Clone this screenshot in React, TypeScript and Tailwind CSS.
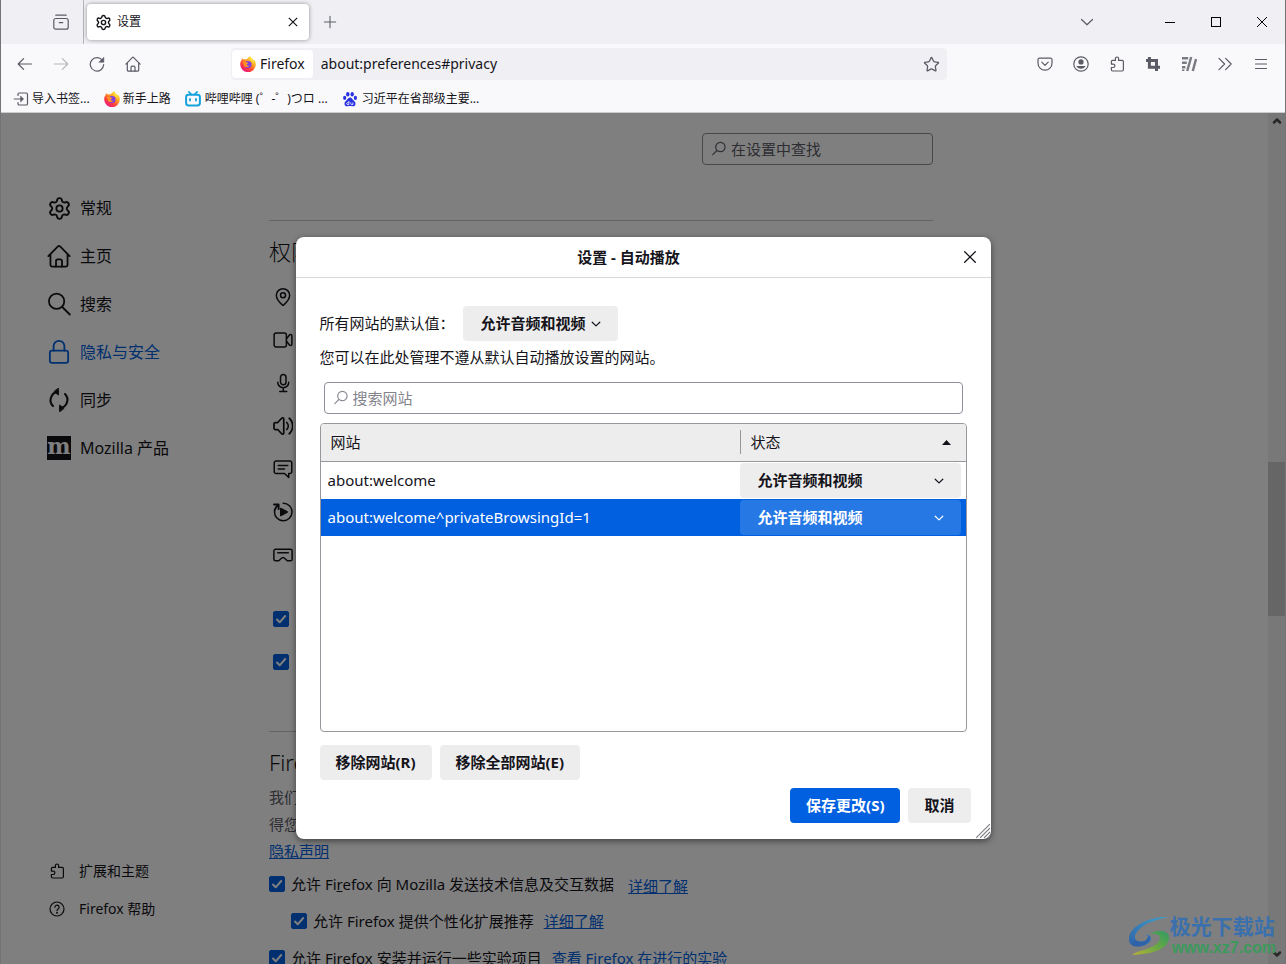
import React, { useState } from "react";
import { ChevronDown, ChevronUp, MapPin, Settings, Star } from "lucide-react";

type IconProps = { className?: string; children?: React.ReactNode };

// Shared 16x16 line icon frame
function Glyph({ className = "size-4", children }: IconProps) {
  return (
    <svg
      className={className}
      viewBox="0 0 16 16"
      fill="none"
      stroke="currentColor"
      strokeWidth="1.2"
      strokeLinecap="round"
      strokeLinejoin="round"
      aria-hidden="true"
    >
      {children}
    </svg>
  );
}

const HomeIcon = ({ className }: IconProps) => (
  <Glyph className={className}>
    <path d="M.9 8.1 7.3 1.6a1 1 0 0 1 1.4 0l6.400 6.500M2.300 6.800v7.100a1.200 1.200 0 0 0 1.200 1.200h9a1.200 1.200 0 0 0 1.200-1.200V6.800" />
    <path d="M6 15v-3.600a1.200 1.200 0 0 1 1.200-1.200h1.600a1.200 1.200 0 0 1 1.200 1.200V15" />
  </Glyph>
);

const PuzzleIcon = ({ className }: IconProps) => (
  <Glyph className={className}>
    <path d="M6.400 4.400V2.600a1.600 1.600 0 0 1 3.200 0v1.800h3.600a1.200 1.200 0 0 1 1.200 1.200v8.200a1.200 1.200 0 0 1-1.200 1.200H3.600a1.200 1.200 0 0 1-1.200-1.200v-2.300h1.800a1.700 1.700 0 0 0 0-3.400H2.400V5.600a1.200 1.200 0 0 1 1.200-1.200z" />
  </Glyph>
);

const SearchIcon = ({ className }: IconProps) => (
  <Glyph className={className}>
    <circle cx="6.400" cy="6.200" r="5.100" />
    <path d="m10.200 10 5 5" />
  </Glyph>
);

// Search fields use the handle on the left
const FieldSearchIcon = () => (
  <Glyph className="size-4 shrink-0">
    <circle cx="9.400" cy="6" r="4.700" />
    <path d="m6 9.400-4.200 4.300" />
  </Glyph>
);

const LockIcon = ({ className }: IconProps) => (
  <Glyph className={className}>
    <rect x="1.900" y="7.100" width="12.200" height="8.200" rx="1.400" />
    <path d="M4.400 7V4.200a3.600 3.600 0 0 1 7.200 0V7" />
  </Glyph>
);

const SyncIcon = ({ className }: IconProps) => (
  <Glyph className={className}>
    <path d="M7.400 2.500A5.600 5.600 0 0 0 4 12M8.600 13.500A5.600 5.600 0 0 0 12 4" strokeWidth="1.400" />
    <path d="M7.600.3v4.400L4.800 2.500zM8.400 15.700v-4.400l2.800 2.200z" fill="currentColor" strokeWidth=".6" />
  </Glyph>
);

const VideoIcon = ({ className }: IconProps) => (
  <Glyph className={className}>
    <rect x=".9" y="2.400" width="9.800" height="11.200" rx="1.600" />
    <path d="M10.800 7 13 4.200c.8-.9 2.100-.6 2.100.4v6.800c0 1-1.300 1.300-2.100.4L10.800 9" />
  </Glyph>
);

const MicIcon = ({ className }: IconProps) => (
  <Glyph className={className}>
    <rect x="6" y="1.200" width="4.400" height="8.200" rx="2.200" />
    <path d="M3.800 7.400a4.400 4.400 0 0 0 8.800 0M8.200 11.800v2.800M5.400 14.800h5.600" />
  </Glyph>
);

const VolumeIcon = ({ className }: IconProps) => (
  <Glyph className={className}>
    <path
      d="M1.800 5.200h2l3.100-3.400c.6-.7 1.700-.3 1.700.6v11.200c0 .9-1.100 1.300-1.700.6l-3.100-3.400h-2a1 1 0 0 1-1-1V6.200a1 1 0 0 1 1-1z"
      strokeWidth="1.400"
    />
    <path d="M11 5.200a4 4 0 0 1 0 5.600M13 1.800a8.400 8.400 0 0 1 0 12.400" strokeWidth="1.400" />
  </Glyph>
);

const MessageIcon = ({ className }: IconProps) => (
  <Glyph className={className}>
    <path d="M2.500 1.600h11A1.400 1.400 0 0 1 15 3v7.200a1.400 1.400 0 0 1-1.500 1.400h-.9v3.100l-3.400-3.100H2.500A1.400 1.400 0 0 1 1 10.200V3a1.400 1.400 0 0 1 1.500-1.400z" />
    <path d="M4.200 5.200h7.600M4.200 8h5" />
  </Glyph>
);

const AutoplayIcon = ({ className }: IconProps) => (
  <Glyph className={className}>
    <path d="M8.200 1a7 7 0 1 1-7 6.800" />
    <path d="M.8 2h3.700v3.700M4.200 2.300C2.600 3.500 1.600 5 1.300 7" strokeWidth="1.500" />
    <path d="M6.200 5.200v5.600L11.400 8z" fill="currentColor" />
  </Glyph>
);

const HeadsetIcon = ({ className }: IconProps) => (
  <Glyph className={className}>
    <path d="M2 3.400h12a1.300 1.300 0 0 1 1.300 1.300v6.600a1.300 1.300 0 0 1-1.300 1.300h-2.600L9 10.400a1.600 1.600 0 0 0-2 0l-2.400 2.200H2a1.300 1.300 0 0 1-1.300-1.300V4.700A1.300 1.300 0 0 1 2 3.400z" />
    <path d="M3.800 6.200h8.400" />
  </Glyph>
);

const HelpIcon = ({ className }: IconProps) => (
  <Glyph className={className}>
    <circle cx="8" cy="8" r="7" />
    <path d="M5.900 6.200a2.100 2.100 0 1 1 3.200 1.800c-.7.5-1.100.8-1.100 1.600" />
    <circle cx="8" cy="11.700" r=".4" fill="currentColor" />
  </Glyph>
);

const BackIcon = () => (
  <Glyph>
    <path d="M14.600 8H1.200M6.600 2.600 1.200 8l5.400 5.400" />
  </Glyph>
);

const ForwardIcon = () => (
  <Glyph>
    <path d="M1.400 8h13.400M9.400 2.600 14.800 8l-5.400 5.400" />
  </Glyph>
);

const ReloadIcon = () => (
  <Glyph>
    <path d="M13.400 4.400A6.700 6.700 0 1 0 14.700 8.600" />
    <path d="M14.800 1.600v4.600h-4.600z" fill="currentColor" strokeWidth=".6" />
  </Glyph>
);

const PocketIcon = () => (
  <Glyph>
    <path d="M2.400 2.200h11.200A1.400 1.400 0 0 1 15 3.600v3.600a7 7 0 0 1-14 0V3.600a1.400 1.400 0 0 1 1.400-1.400z" />
    <path d="m4.800 6.200 3.200 3.200 3.200-3.200" />
  </Glyph>
);

const AccountIcon = () => (
  <Glyph>
    <circle cx="8" cy="8" r="7.200" />
    <circle cx="8" cy="5.900" r="2.600" fill="currentColor" stroke="none" />
    <path d="M3.800 10h8.400c.3 0 .4.3.2.6a5.400 5.400 0 0 1-8.800 0c-.2-.3-.1-.6.2-.6z" fill="currentColor" stroke="none" />
  </Glyph>
);

const CropIcon = () => (
  <Glyph>
    <path d="M4.400 1v10.300H15M1 4.400h10.500V15" strokeWidth="3" strokeLinecap="butt" strokeLinejoin="miter" />
  </Glyph>
);

const StripesIcon = () => (
  <Glyph>
    <path d="M1 2.300h6.200M1 6.800h4.800M1 11.200h3.400" strokeWidth="2.600" strokeLinecap="butt" />
    <path d="M1 14.200h2.400" strokeWidth="1.600" strokeLinecap="butt" />
    <path d="M6.200 15 10.200 1M11.800 15 15 3" strokeWidth="2.400" strokeLinecap="butt" />
  </Glyph>
);

const OverflowIcon = () => (
  <Glyph>
    <path d="m2 2.400 5.600 5.600L2 13.600M8.600 2.400l5.600 5.600-5.600 5.600" />
  </Glyph>
);

const MenuIcon = () => (
  <Glyph>
    <path d="M2.500 3.500h11M2.500 8h11M2.500 12.500h11" />
  </Glyph>
);

const FirefoxLogo = () => (
  <svg className="size-4 shrink-0" viewBox="0 0 16 16" aria-hidden="true">
    <defs>
      <linearGradient id="fx-body" x1="0.85" y1="0.05" x2="0.2" y2="0.95">
        <stop offset="0" stopColor="#fff04a" />
        <stop offset="0.4" stopColor="#ff9a1f" />
        <stop offset="0.7" stopColor="#ff3f3d" />
        <stop offset="1" stopColor="#e31587" />
      </linearGradient>
    </defs>
    <path
      d="M10.300.2c.3 1.400 1.200 2.100 2.300 3 .3.2.6.6.8 1 .4-.1.6-.2.8-.4 1.100 1.400 1.700 3 1.600 4.700A7.800 7.800 0 0 1 .2 8.300C.2 6.500.8 5 1.800 3.800l.1-1.700 1.600 1.300c.8-.3 1.800-.2 2.600 0C7.500 2.800 8.100 1 10.300.2z"
      fill="url(#fx-body)"
    />
    <circle cx="8" cy="8.600" r="3.500" fill="#7b3fe4" />
    <path d="M3 6c1.500-.7 2.900-.3 3.600.5.8.1 1.600 0 2 .3-.3.9-1.500 1-1.900 1.900.4.9 1.700 1.300 3 .6-1 2.400-4.600 2.400-5.700.1C3.400 8.200 3.600 7 3 6z" fill="#ff9420" />
    <path d="M10.300.2c.3 1.400 1.200 2.100 2.300 3 1.300 1.200 1.700 3.200 1 5.200-.3-1.800-1.300-2.700-2.600-3.300C9.200 4 9.200 1.700 10.300.2z" fill="#ffdc3e" />
  </svg>
);

const BilibiliLogo = () => (
  <svg className="size-4 shrink-0" viewBox="0 0 16 16" fill="none" stroke="#14a3dc" strokeLinecap="round" aria-hidden="true">
    <rect x="1.100" y="3.800" width="13.800" height="10.600" rx="2.400" strokeWidth="2" />
    <path d="m4 1 2 2.200M12 1l-2 2.200M5 8v1.600M11 8v1.600" strokeWidth="1.800" />
  </svg>
);

const BaiduLogo = () => (
  <svg className="size-4 shrink-0" viewBox="0 0 16 16" fill="#2932e1" aria-hidden="true">
    <ellipse cx="5.800" cy="3.200" rx="1.700" ry="2.300" />
    <ellipse cx="10.200" cy="3.200" rx="1.700" ry="2.300" />
    <ellipse cx="2.700" cy="6.900" rx="1.600" ry="2.100" />
    <ellipse cx="13.400" cy="6.900" rx="1.600" ry="2.100" />
    <path d="M8 6.600c1.600 0 2.200 1.500 3.400 2.600 1.400 1.200 2.500 2.300 2 4.200-.5 1.700-2 2-3.300 1.800-1.400-.2-2.800-.2-4.200 0-1.300.2-2.800-.1-3.300-1.800-.5-1.900.6-3 2-4.200C5.800 8.100 6.400 6.600 8 6.600z" />
    <path d="M6.900 10v3.600H5.700a.9.9 0 0 1 0-2h1M8.800 11.400v1.400c0 .5.300.8.800.8h1.300v-2.200" fill="none" stroke="#fff" strokeWidth=".8" />
  </svg>
);

const NAV_ITEMS = [
  { label: "常规", icon: <Settings className="size-[25px] -mr-px" strokeWidth={1.8} /> },
  { label: "主页", icon: <HomeIcon className="size-6" /> },
  { label: "搜索", icon: <SearchIcon className="size-6" /> },
  { label: "隐私与安全", icon: <LockIcon className="size-6" />, active: true },
  { label: "同步", icon: <SyncIcon className="size-6" /> },
  {
    label: "Mozilla 产品",
    icon: (
      <span className="flex size-6 items-center justify-center bg-[#15141a] pb-1 font-['DejaVu_Serif',serif] text-[22px] leading-none font-bold text-white">
        m
      </span>
    ),
  },
];

const PERMISSIONS = [
  { key: "location", icon: <MapPin className="size-[22px]" strokeWidth={1.8} /> },
  { key: "camera", icon: <VideoIcon className="size-5" /> },
  { key: "microphone", icon: <MicIcon className="size-5" /> },
  { key: "speaker", icon: <VolumeIcon className="size-5" /> },
  { key: "notifications", icon: <MessageIcon className="size-5" /> },
  { key: "autoplay", icon: <AutoplayIcon className="size-5" /> },
  { key: "vr", icon: <HeadsetIcon className="size-5" /> },
];

const SITES = ["about:welcome", "about:welcome^privateBrowsingId=1"];

const TOOLBAR_BUTTON = "flex h-8 w-9 items-center justify-center text-[#5b5b66]";
const DIALOG_BUTTON = "h-[35px] rounded bg-[#ededee] px-4 font-bold";

function Checkbox({ id, label }: { id: string; label?: string }) {
  return (
    <span className="relative flex size-4 shrink-0">
      <input
        id={id}
        type="checkbox"
        defaultChecked
        aria-label={label}
        className="peer size-4 appearance-none rounded-xs border border-[#8f8f9d] checked:border-[#0060df] checked:bg-[#0060df]"
      />
      <svg
        className="pointer-events-none absolute inset-0 hidden size-4 peer-checked:block"
        viewBox="0 0 16 16"
        fill="none"
        stroke="#fff"
        strokeWidth="2"
        strokeLinecap="round"
        strokeLinejoin="round"
      >
        <path d="m4 8.500 2.700 2.800L12.200 5" />
      </svg>
    </span>
  );
}

function SelectArrow() {
  return (
    <svg
      className="pointer-events-none absolute top-[14px] right-[17px] h-2 w-[10px]"
      viewBox="0 0 10 8"
      fill="none"
      stroke="currentColor"
      strokeWidth="1.200"
      strokeLinecap="round"
      strokeLinejoin="round"
      aria-hidden="true"
    >
      <path d="m1.200 2.200 3.800 3.700 3.800-3.700" />
    </svg>
  );
}

function StatusSelect({ label, selected }: { label: string; selected: boolean }) {
  return (
    <div className="relative mr-[5px]">
      <select
        aria-label={label}
        className={[
          "block h-[35px] w-full appearance-none rounded pr-8 pl-[18px] font-bold",
          selected ? "bg-[#2678e5] text-white" : "bg-[#ededee]",
        ].join(" ")}
      >
        <option>允许音频和视频</option>
      </select>
      <SelectArrow />
    </div>
  );
}

function BrowserChrome() {
  return (
    <header className="shrink-0 border-b border-[#ccccd0] bg-[#f9f9fb]">
      {/* Tab strip */}
      <div className="flex h-11 items-center bg-[#f0f0f4] text-xs">
        <button aria-label="最近浏览" className="flex h-11 w-[83px] items-center justify-end border-r border-[#b5b5bb] pr-[14px] text-[#5b5b66]">
          <Glyph className="size-4">
            <rect x=".8" y="4.500" width="14.400" height="10.700" rx="2" />
            <path d="M2.800 1.200h10.400M6.200 8.600h3.600" />
          </Glyph>
        </button>
        <div className="ml-[3px] flex h-9 w-[222px] items-center rounded bg-white px-2 shadow-[0_0_4px_rgba(0,0,0,0.4)]">
          <Settings className="size-[17px]" strokeWidth={2} />
          <span className="ml-[5px] flex-1">设置</span>
          <button aria-label="关闭标签页" className="flex size-4 items-center justify-center">
            <svg className="size-[10px]" viewBox="0 0 10 10" stroke="currentColor" strokeWidth="1.200" aria-hidden="true">
              <path d="m.8.8 8.400 8.400M9.200.8.8 9.200" />
            </svg>
          </button>
        </div>
        <button aria-label="新建标签页" className="ml-[13px] flex size-4 items-center justify-center text-[#5b5b66]">
          <Glyph className="size-[14px]">
            <path d="M8 1.500v13M1.500 8h13" />
          </Glyph>
        </button>
        <button aria-label="列出所有标签页" className="mr-[42px] ml-auto flex h-8 w-9 items-center justify-center text-[#5b5b66]">
          <Glyph className="size-4">
            <path d="m2.500 5.500 5.500 5.300 5.500-5.300" />
          </Glyph>
        </button>
        <button aria-label="最小化" className="flex h-11 w-[46px] items-center justify-center">
          <span className="h-px w-[10px] bg-black" />
        </button>
        <button aria-label="最大化" className="flex h-11 w-[46px] items-center justify-center">
          <span className="size-[10px] border border-black" />
        </button>
        <button aria-label="关闭" className="flex h-11 w-[46px] items-center justify-center">
          <svg className="size-[10px]" viewBox="0 0 10 10" stroke="#000" aria-hidden="true">
            <path d="m0 0 10 10M10 0 0 10" />
          </svg>
        </button>
      </div>

      {/* Address bar */}
      <div className="flex h-10 items-center px-1.5">
        <button aria-label="后退" className={TOOLBAR_BUTTON}><BackIcon /></button>
        <button aria-label="前进" disabled className={`${TOOLBAR_BUTTON} opacity-40`}><ForwardIcon /></button>
        <button aria-label="重新载入" className={TOOLBAR_BUTTON}><ReloadIcon /></button>
        <button aria-label="主页" className={TOOLBAR_BUTTON}><HomeIcon className="size-4" /></button>
        <div className="mx-20 flex h-8 flex-1 items-center rounded bg-[#f0f0f4] pl-px text-sm">
          <span className="flex h-7 items-center gap-1 rounded bg-white px-2">
            <FirefoxLogo />
            Firefox
          </span>
          <input
            aria-label="网址"
            defaultValue="about:preferences#privacy"
            className="ml-2 min-w-0 flex-1 bg-transparent outline-none"
          />
          <button aria-label="添加书签" className="flex w-8 justify-center text-[#5b5b66]">
            <Star className="size-[17px]" strokeWidth={1.8} />
          </button>
        </div>
        <button aria-label="Pocket" className={TOOLBAR_BUTTON}><PocketIcon /></button>
        <button aria-label="账户" className={TOOLBAR_BUTTON}><AccountIcon /></button>
        <button aria-label="扩展" className={TOOLBAR_BUTTON}><PuzzleIcon className="size-4" /></button>
        <button aria-label="截图" className={TOOLBAR_BUTTON}><CropIcon /></button>
        <button aria-label="附加组件" className={`${TOOLBAR_BUTTON} opacity-80`}><StripesIcon /></button>
        <button aria-label="更多工具" className={TOOLBAR_BUTTON}><OverflowIcon /></button>
        <button aria-label="菜单" className={TOOLBAR_BUTTON}><MenuIcon /></button>
      </div>

      {/* Bookmarks */}
      <nav className="flex h-7 items-center gap-[14px] pt-px pl-3 text-xs whitespace-nowrap">
        <a href="#import" className="flex items-center gap-[3px]">
          <span className="text-[#5b5b66]">
            <Glyph className="size-4">
              <path d="M5 4.500V3.300A1.300 1.300 0 0 1 6.300 2h6.900a1.300 1.300 0 0 1 1.300 1.300v9.400a1.300 1.300 0 0 1-1.300 1.300H6.300A1.300 1.300 0 0 1 5 12.700v-1.200M1.200 8h6.600" />
              <path d="M7.800 5.200 10.600 8l-2.800 2.800z" fill="currentColor" strokeWidth=".6" />
            </Glyph>
          </span>
          导入书签...
        </a>
        <a href="#start" className="flex items-center gap-[3px]"><FirefoxLogo />新手上路</a>
        <a href="#bilibili" className="flex items-center gap-1"><BilibiliLogo />哔哩哔哩 (゜-゜)つロ ...</a>
        <a href="#baidu" className="flex items-center gap-1"><BaiduLogo />习近平在省部级主要...</a>
      </nav>
    </header>
  );
}

function Sidebar() {
  return (
    <aside className="flex w-[268px] shrink-0 flex-col pt-[71px] pb-9 pl-[46px]">
      <nav>
        {NAV_ITEMS.map(({ label, icon, active }) => (
          <a
            key={label}
            href="#privacy"
            className={["flex h-12 items-center gap-[9px] text-base", active ? "text-[#0060df]" : ""].join(" ")}
          >
            {icon}
            {label}
          </a>
        ))}
      </nav>
      <nav className="mt-auto text-sm">
        <a href="#addons" className="flex h-[38px] items-center gap-[14px] pl-0.5">
          <PuzzleIcon className="size-4" />
          扩展和主题
        </a>
        <a href="#help" className="flex h-[38px] items-center gap-[14px] pl-0.5">
          <HelpIcon className="size-4" />
          Firefox 帮助
        </a>
      </nav>
    </aside>
  );
}

function PrivacyPane() {
  return (
    <main className="w-full max-w-[664px] pt-5">
      <label className="ml-auto flex h-8 w-[231px] items-center gap-1 rounded border border-[#8f8f9d] px-2 text-[#5b5b66]">
        <FieldSearchIcon />
        <input aria-label="在设置中查找" placeholder="在设置中查找" className="min-w-0 flex-1 outline-none placeholder:text-[#5b5b66]" />
      </label>

      <section className="mt-[55px] border-t border-[#c4c4c8] pt-[14px]">
        <h2 className="text-[22px] leading-8 font-light">权限</h2>
        <ul className="mt-2">
          {PERMISSIONS.map(({ key, icon }) => (
            <li key={key} className="flex h-[43px] items-center pl-1">
              <span className="flex w-5 justify-center">{icon}</span>
            </li>
          ))}
        </ul>
        <div className="mt-[21px] pl-1">
          <div className="flex h-[43px] items-center"><Checkbox id="popups" label="阻止弹出式窗口" /></div>
          <div className="flex h-[43px] items-center"><Checkbox id="addon-warning" label="安装附加组件时警告" /></div>
        </div>
      </section>

      <section className="mt-12 border-t border-[#c4c4c8] pt-[14px]">
        <h2 className="text-[22px] leading-8 font-light">Firefox</h2>
        <p className="mt-1.5 leading-[27px] text-[#5b5b66]">
          我们
          <br />
          得您
          <br />
          <a href="#notice" className="text-[#0060df] underline">隐私声明</a>
        </p>
        <div className="flex h-[37px] items-center whitespace-nowrap">
          <Checkbox id="telemetry" />
          <label htmlFor="telemetry" className="ml-1.5">
            允许 Fi<u>r</u>efox 向 Mozilla 发送技术信息及交互数据
          </label>
          <a href="#telemetry" className="ml-[14px] pt-1 text-[#0060df] underline">详细了解</a>
        </div>
        <div className="flex h-[37px] items-center pl-[22px] whitespace-nowrap">
          <Checkbox id="recommend" />
          <label htmlFor="recommend" className="ml-1.5">允许 Firefox 提供个性化扩展推荐</label>
          <a href="#recommend" className="ml-[10px] text-[#0060df] underline">详细了解</a>
        </div>
        <div className="flex h-[37px] items-center whitespace-nowrap">
          <Checkbox id="studies" />
          <label htmlFor="studies" className="ml-1.5">允许 Firefox 安装并运行一些实验项目</label>
          <a href="#studies" className="ml-[10px] text-[#0060df] underline">查看 Firefox 在进行的实验</a>
        </div>
      </section>
    </main>
  );
}

function AutoplayDialog() {
  const [selectedSite, setSelectedSite] = useState(SITES[1]);

  return (
    <div role="dialog" aria-labelledby="dialog-title" className="relative w-[695px] rounded-lg bg-white shadow-[0_2px_6px_rgba(0,0,0,0.5)]">
      <div className="flex h-[41px] items-center border-b border-[#d7d7db] pr-[13px]">
        <h1 id="dialog-title" className="flex-1 text-center font-bold">设置 - 自动播放</h1>
        <button aria-label="关闭" className="flex size-4 items-center justify-center">
          <svg className="size-3" viewBox="0 0 12 12" stroke="currentColor" strokeWidth="1.300" strokeLinecap="round" aria-hidden="true">
            <path d="m.7.7 10.600 10.600M11.300.7.7 11.300" />
          </svg>
        </button>
      </div>

      <div className="px-6 pt-7">
        <div className="flex items-center">
          <label htmlFor="default-autoplay">所有网站的默认值：</label>
          <div className="relative ml-2">
            <select id="default-autoplay" className="block h-[35px] w-[155px] appearance-none rounded bg-[#ededee] pl-[18px] font-bold">
              <option>允许音频和视频</option>
            </select>
            <SelectArrow />
          </div>
        </div>
        <p className="mt-1 leading-6">您可以在此处管理不遵从默认自动播放设置的网站。</p>
        <label className="mx-1 mt-[13px] flex h-8 items-center gap-1 rounded border border-[#8f8f9d] px-2 text-[#8b8b94]">
          <FieldSearchIcon />
          <input aria-label="搜索网站" placeholder="搜索网站" className="min-w-0 flex-1 outline-none placeholder:text-[#84848d]" />
        </label>

        <div className="mt-[9px] h-[309px] overflow-hidden rounded border border-[#97979d]">
          <table className="w-full table-fixed border-separate border-spacing-0 text-left">
            <thead>
              <tr className="h-[38px] bg-[#ededed]">
                <th className="border-b border-[#97979d] pl-[10px] font-normal">网站</th>
                <th className="w-[226px] border-b border-[#97979d] font-normal">
                  <div className="flex h-6 items-center justify-between border-l border-[#97979d] pr-[15px] pl-[10px]">
                    状态
                    <svg className="h-[5px] w-[9px]" viewBox="0 0 9 5" fill="#15141a" aria-hidden="true">
                      <path d="M4.500 0 9 5H0z" />
                    </svg>
                  </div>
                </th>
              </tr>
            </thead>
            <tbody>
              {SITES.map((site) => {
                const selected = site === selectedSite;
                return (
                  <tr
                    key={site}
                    onClick={() => setSelectedSite(site)}
                    className={selected ? "h-[37px] bg-[#0060df] text-white" : "h-[37px]"}
                  >
                    <td className="pl-[7px]">{site}</td>
                    <td>
                      <StatusSelect label={site} selected={selected} />
                    </td>
                  </tr>
                );
              })}
            </tbody>
          </table>
        </div>

        <div className="mt-[13px] flex gap-2">
          <button className={DIALOG_BUTTON}>移除网站(R)</button>
          <button className={DIALOG_BUTTON}>移除全部网站(E)</button>
        </div>
      </div>

      <div className="flex justify-end gap-2 px-5 pt-2 pb-4">
        <button className="h-[35px] rounded bg-[#0060df] px-4 font-bold text-white">保存更改(S)</button>
        <button className={DIALOG_BUTTON}>取消</button>
      </div>
      <svg className="absolute right-px bottom-px size-[14px]" viewBox="0 0 14 14" stroke="#7c7c82" strokeWidth="1.100" aria-hidden="true">
        <path d="M0 14 14 0M4 14 14 4M8 14l6-6M12 14l2-2" />
      </svg>
    </div>
  );
}

function Watermark() {
  return (
    <div className="pointer-events-none absolute right-[9px] bottom-1.5 flex items-center">
      <svg className="h-10 w-[42px]" viewBox="0 0 42 40" aria-hidden="true">
        <defs>
          <linearGradient id="wm-blue" x1="0" y1="1" x2="1" y2="0">
            <stop offset="0" stopColor="#2f62a8" />
            <stop offset="1" stopColor="#3fa0cc" />
          </linearGradient>
          <linearGradient id="wm-green" x1="0" y1="1" x2="1" y2="0">
            <stop offset="0" stopColor="#b5b13a" />
            <stop offset="0.5" stopColor="#6aa843" />
            <stop offset="1" stopColor="#2f9a62" />
          </linearGradient>
        </defs>
        <path
          d="M40 1C24 0 2 9 1 22c-.3 4 1 7 5 8 6 2 16-1 17-7 .5-3-3-5-6-4 3 0 4 2 2 4-2 3-8 4-11 1-4-5 4-12 10-16C24 5 32 3 40 1z"
          fill="url(#wm-blue)"
        />
        <path d="M5 30c6 1 15-1 17-7 .3-3-2-4-5-4 3 0 4 2 2 4-3 4-9 3-12 1-3 1-4 4-2 6z" fill="#2f62a8" />
        <path d="M22 18c5-4 19-5 19 4 0 9-12 16-37 17 2-2 5-3 8-4 9-2 20-7 20-13 0-4-5-5-10-4z" fill="url(#wm-green)" />
      </svg>
      <div>
        <div className="text-[21px] leading-6 font-bold text-[#3a70ad]">极光下载站</div>
        <div className="pl-0.5 font-['Liberation_Sans',sans-serif] text-base leading-5 font-bold text-[#3b9a5c]">www.xz7.com</div>
      </div>
    </div>
  );
}

export default function App() {
  return (
    <div className="flex h-screen flex-col overflow-hidden border-x border-[#737378] bg-white font-['Noto_Sans','Noto_Sans_CJK_SC',sans-serif] text-[15px] leading-5 text-[#15141a]">
      <BrowserChrome />
      <div className="relative flex min-h-0 flex-1">
        <div className="flex min-w-0 flex-1 overflow-hidden">
          <Sidebar />
          <PrivacyPane />
        </div>
        {/* Scrollbar */}
        <div className="flex w-[17px] flex-col items-center bg-[#f0f0f0] pt-0.5 pb-1 text-[#505050]">
          <ChevronUp className="size-3" strokeWidth={5} />
          <div className="mt-[335px] h-[154px] w-full bg-[#cdcdcd]" />
          <ChevronDown className="mt-auto size-3" strokeWidth={5} />
        </div>
        <div className="absolute inset-0 flex items-center justify-center bg-black/50 pb-0.5">
          <AutoplayDialog />
        </div>
        <Watermark />
      </div>
    </div>
  );
}
